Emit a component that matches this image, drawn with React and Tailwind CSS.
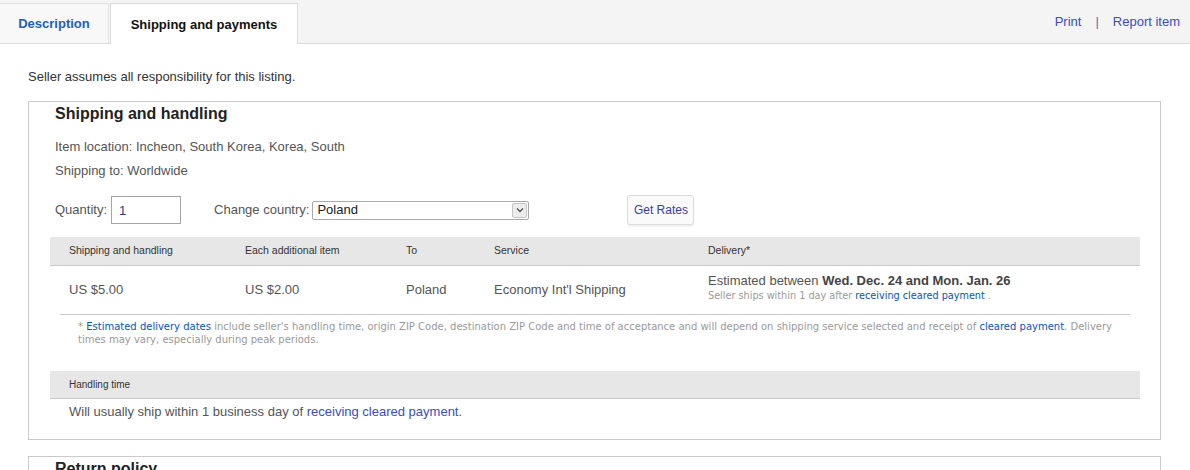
import React from 'react';

const Link = ({ children, className = '' }) => (
  <a href="#" className={`text-[#0654ba] ${className}`}>{children}</a>
);

const TableHead = ({ cols }) => (
  <div className="flex h-[29px] items-center border-b border-[#c8c8c8] bg-[#e7e7e7] text-[10.5px] text-[#333]">
    {cols.map((c) => (
      <div key={c.label} className={c.w}>{c.label}</div>
    ))}
  </div>
);

const App = () => {
  const cols = [
    { label: 'Shipping and handling', w: 'w-[176px] pl-[19px] box-content' },
    { label: 'Each additional item', w: 'w-[161px]' },
    { label: 'To', w: 'w-[88px]' },
    { label: 'Service', w: 'w-[214px]' },
    { label: 'Delivery*', w: 'flex-1' },
  ];

  return (
    <div className="min-h-screen bg-white font-['Liberation_Sans',Arial,sans-serif] text-[13px] text-[#333]">
      {/* tabs */}
      <div className="flex h-[44px] items-end justify-between border-b border-[#dcdcdc] bg-[#f4f4f4]">
        <div className="flex h-[40px]">
          <div className="flex w-[109px] items-center justify-center border-r border-t border-[#e2e2e2] bg-[#f8f8f8] pt-[1px] text-[13px] font-bold text-[#1c5fc1]">
            Description
          </div>
          <div className="-mb-px ml-px flex w-[188px] items-center justify-center border-x border-t border-[#dcdcdc] bg-white pt-[1px] text-[13px] font-bold text-[#111]">
            Shipping and payments
          </div>
        </div>
        <div className="mb-[12px] mr-[10px] flex items-center text-[13px] text-[#3b4cc0]">
          <a href="#">Print</a>
          <span className="mx-[14px] text-[#5d6ea8]">|</span>
          <a href="#">Report item</a>
        </div>
      </div>

      <div className="pl-[28px] pr-[29px] pt-[25px]">
        <p className="leading-[16px]">Seller assumes all responsibility for this listing.</p>

        <div className="mt-[16px] h-[339px] border border-[#cbcbcb] pl-[21px] pr-[20px]">
          <h2 className="mt-[2px] pl-[5px] text-[16px] font-bold leading-[20px] text-[#222]">Shipping and handling</h2>
          <div className="pl-[5px] text-[#555]">
            <p className="mt-[15px] leading-[16px]">Item location: Incheon, South Korea, Korea, South</p>
            <p className="mt-[8px] leading-[16px]">Shipping to: Worldwide</p>
            <div className="mt-[16px] flex items-center">
              <span>Quantity:</span>
              <input
                type="text"
                defaultValue="1"
                className="ml-[4px] h-[28px] w-[70px] border border-[#a6a6a6] px-[7px] text-[13px] text-[#1c3e8c] outline-none"
              />
              <span className="ml-[33px]">Change country:</span>
              <div className="ml-[3px] flex h-[19px] w-[217px] items-center justify-between rounded-[2px] border border-[#a9a9a9] pl-[4px] text-[#222]">
                <span className="leading-[16px]">Poland</span>
                <span className="mr-[1px] flex h-[15px] w-[15px] items-center justify-center rounded-[2px] border border-[#c7c7c7] bg-[#ececec]">
                  <svg width="8" height="6" viewBox="0 0 8 6">
                    <path d="M1 1.5 L4 4.5 L7 1.5" fill="none" stroke="#555" strokeWidth="1.4" />
                  </svg>
                </span>
              </div>
              <button className="ml-[98px] h-[30px] w-[67px] rounded-[3px] border border-[#dcdcdc] bg-[#fafafa] text-[12px] text-[#3b3ba8] shadow-[0_2px_2px_rgba(0,0,0,0.06)]">
                Get Rates
              </button>
            </div>
          </div>

          <div className="mt-[12px]">
            <TableHead cols={cols} />
            <div className="flex h-[48px] items-center text-[13px] text-[#555]">
              <div className="w-[176px] pl-[19px] box-content">US $5.00</div>
              <div className="w-[161px]">US $2.00</div>
              <div className="w-[88px]">Poland</div>
              <div className="w-[214px]">Economy Int'l Shipping</div>
              <div className="flex-1 -mt-[5px]">
                <div className="leading-[17px]">
                  Estimated between <b className="text-[#444]">Wed. Dec. 24 and Mon. Jan. 26</b>
                </div>
                <div className="font-['DejaVu_Sans',Verdana,sans-serif] text-[9.7px] leading-[14px] text-[#999]">
                  Seller ships within 1 day after <Link>receiving cleared payment</Link> .
                </div>
              </div>
            </div>
            <div className="mx-[10px] border-t border-[#c8c8c8]" />
            <p className="mt-[5px] pl-[28px] pr-[8px] font-['DejaVu_Sans',Verdana,sans-serif] text-[10px] leading-[13px] text-[#999]">
              * <Link>Estimated delivery dates</Link> include seller's handling time, origin ZIP Code, destination ZIP Code and time of acceptance and will depend on shipping service selected and receipt of <Link>cleared payment</Link>. Delivery
              <br />
              times may vary, especially during peak periods.
            </p>

            <div className="mt-[25px]">
              <div className="flex h-[28px] items-center border-b border-[#c8c8c8] bg-[#e7e7e7] pl-[19px] text-[10px] text-[#333]">
                Handling time
              </div>
              <p className="mt-[5px] pl-[19px] leading-[16px] text-[#555]">
                Will usually ship within 1 business day of <a href="#" className="text-[#3b4cc0]">receiving cleared payment</a>.
              </p>
            </div>
          </div>
        </div>

        <div className="mt-[16px] h-[40px] border border-[#cbcbcb] pl-[26px]">
          <h2 className="mt-[2px] text-[16px] font-bold leading-[20px] text-[#222]">Return policy</h2>
        </div>
      </div>
    </div>
  );
};

export default App;
